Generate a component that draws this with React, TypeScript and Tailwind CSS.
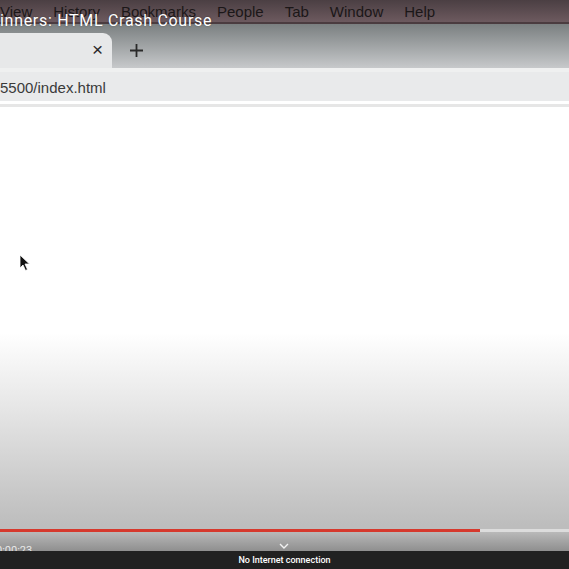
import React from 'react';

const menuItems = ['View', 'History', 'Bookmarks', 'People', 'Tab', 'Window', 'Help'];

const App: React.FC = () => {
  return (
    <div className="relative w-[569px] h-[569px] overflow-hidden flex flex-col bg-white font-['Liberation_Sans',Arial,sans-serif]">
      {/* mac menu bar */}
      <div className="h-[24px] shrink-0 flex items-center gap-[21px] bg-linear-to-b from-[#4b3f43] to-[#6d5a5f] border-b-2 border-[#4b3c40] text-[15px] text-[#1b1718]">
        {menuItems.map((item) => (
          <span key={item} className="leading-none pt-[1px]">
            {item}
          </span>
        ))}
      </div>

      {/* tab strip */}
      <div className="h-[44px] shrink-0 flex items-end bg-linear-to-b from-[#7b8081] to-[#c7c9cb]">
        <div className="w-[112px] h-[35px] bg-[#e7e8e9] rounded-tr-[9px] flex items-center justify-end pr-[9px]">
          <span className="text-[19px] leading-none text-[#2a2a2a] mb-[2px]">×</span>
        </div>
        <div className="h-[35px] flex items-center ml-[17px]">
          <svg width="15" height="15" viewBox="0 0 15 15" className="mb-[1px]">
            <path d="M7.5 1v13M1 7.5h13" stroke="#2a2a2a" strokeWidth="1.8" />
          </svg>
        </div>
      </div>

      {/* address bar */}
      <div className="h-[33px] shrink-0 bg-[#e9eaeb] border-t-4 border-[#eff0f0] flex items-center">
        <span className="text-[15px] text-[#3a3a3a] leading-none pt-[1px]">5500/index.html</span>
      </div>
      <div className="h-[3px] shrink-0 bg-white" />
      <div className="h-[3px] shrink-0 bg-[#e6e6e6]" />

      {/* page content with player overlay gradient */}
      <div className="flex-1 flex flex-col">
        <div className="flex-1 bg-linear-to-b from-white from-[54%] via-[#e6e6e6] via-[72%] to-[#bdbdbd]" />
        <div className="h-[26px] shrink-0 flex flex-col bg-linear-to-b from-[#bdbdbd] from-[20%] to-[#8f8f8f] overflow-hidden">
          <div className="mt-[4px] h-[3px] flex">
            <div className="w-[480px] bg-[#d6392d]" />
            <div className="flex-1 bg-[#dcdcdc]" />
          </div>
          <div className="relative flex-1">
            <span className="absolute left-[-4px] top-[13px] text-[11px] text-[#e8e8e8] font-['Roboto',sans-serif] leading-none">
              0:00:23
            </span>
            <svg width="10" height="6" viewBox="0 0 10 6" className="absolute left-[279px] top-[11px]">
              <path d="M1 1l4 4 4-4" stroke="#f2f2f2" strokeWidth="1.4" fill="none" />
            </svg>
          </div>
        </div>
      </div>

      {/* offline notice */}
      <div className="h-[18px] shrink-0 bg-[#212121] flex items-center justify-center">
        <span className="text-[9px] text-white font-medium font-['Roboto',sans-serif] leading-none">
          No Internet connection
        </span>
      </div>

      {/* video title overlay */}
      <div className="absolute left-0 top-[13px] text-[16px] tracking-[0.7px] leading-none text-white font-['Roboto',sans-serif] [text-shadow:0_0_2px_rgba(0,0,0,0.35)]">
        inners: HTML Crash Course
      </div>

      {/* mouse pointer */}
      <svg width="12" height="18" viewBox="0 0 12 18" className="absolute left-[19px] top-[254px]">
        <path d="M1 1v13l3-3 2.5 5.5 2-1L6 10h4.5z" fill="#111" stroke="#fff" strokeWidth="0.8" />
      </svg>
    </div>
  );
};

export default App;
